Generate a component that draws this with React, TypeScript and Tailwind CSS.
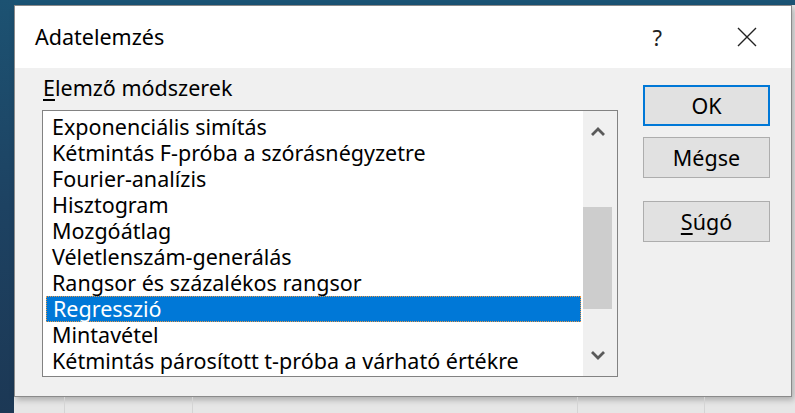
import React from "react";

const methods = [
  "Exponenciális simítás",
  "Kétmintás F-próba a szórásnégyzetre",
  "Fourier-analízis",
  "Hisztogram",
  "Mozgóátlag",
  "Véletlenszám-generálás",
  "Rangsor és százalékos rangsor",
  "Regresszió",
  "Mintavétel",
  "Kétmintás párosított t-próba a várható értékre",
];

const selected = "Regresszió";

function Chevron({ down = false }: { down?: boolean }) {
  return (
    <svg width="16" height="10" viewBox="0 0 16 10" className="text-[#5a5a5a]">
      <path
        d={down ? "M2 2 L8 8 L14 2" : "M2 8 L8 2 L14 8"}
        fill="none"
        stroke="currentColor"
        strokeWidth="2.8"
      />
    </svg>
  );
}

function DialogButton({
  children,
  primary = false,
  className = "",
}: {
  children: React.ReactNode;
  primary?: boolean;
  className?: string;
}) {
  return (
    <button
      className={`flex h-[41px] w-[127px] items-center justify-center bg-[#e1e1e1] text-[21.5px] leading-none text-black ${
        primary ? "border-2 border-[#0078d7]" : "border border-[#adadad]"
      } ${className}`}
    >
      {children}
    </button>
  );
}

export default function App() {
  return (
    <div
      className="flex h-[413px] w-[795px] overflow-hidden bg-[#e6e6e6]"
      style={{ fontFamily: '"Noto Sans", "Open Sans", sans-serif' }}
    >
      {/* worksheet edge on the left */}
      <div className="w-[14px] shrink-0 bg-gradient-to-b from-[#1c5272] via-[#1d4262] to-[#1c3855]" />

      <div className="flex flex-1 flex-col">
        <div className="h-[5px] shrink-0 bg-[#1a5475]" />

        {/* dialog window */}
        <div className="flex h-[392px] w-[778px] shrink-0 flex-col border border-[#8a8a8a] bg-[#f0f0f0] shadow-[2px_3px_6px_rgba(0,0,0,0.25)]">
          <div className="flex h-[62px] shrink-0 items-center bg-white pl-[20px]">
            <span className="text-[21.5px] leading-[28px] text-black">Adatelemzés</span>
            <span className="ml-auto mr-[75px] text-[22px] leading-[28px] text-[#222]">?</span>
            <svg width="20" height="20" viewBox="0 0 20 20" className="mr-[34px]">
              <path d="M1 1 L19 19 M19 1 L1 19" stroke="#222" strokeWidth="1.4" />
            </svg>
          </div>

          <div className="flex flex-1 pl-[27px] pt-[17px]">
            <div className="flex flex-col">
              <div className="-mt-[9px] h-[24px] pl-[1px] text-[21.5px] leading-[24px] text-black">
                <span className="underline underline-offset-[3px]">E</span>lemző módszerek
              </div>

              <div className="mt-[10px] flex h-[267px] w-[576px] border border-[#828282] bg-white">
                <ul className="flex-1 pl-[3px] pr-[2px] pt-[3px]">
                  {methods.map((m) => (
                    <li
                      key={m}
                      className={`flex h-[26px] items-center whitespace-nowrap pl-[6px] text-[21.5px] leading-[24px] ${
                        m === selected
                          ? "border border-dotted border-[#e89a4a] bg-[#0078d7] pl-[5px] text-white"
                          : "text-black"
                      }`}
                    >
                      {m}
                    </li>
                  ))}
                </ul>

                <div className="flex w-[34px] flex-col bg-[#f0f0f0]">
                  <div className="flex h-[42px] w-[29px] items-center justify-center">
                    <Chevron />
                  </div>
                  <div className="flex-1">
                    <div className="mt-[54px] h-[102px] w-[29px] bg-[#cdcdcd]" />
                  </div>
                  <div className="flex h-[42px] w-[29px] items-center justify-center">
                    <Chevron down />
                  </div>
                </div>
              </div>
            </div>

            <div className="ml-[25px] flex flex-col">
              <DialogButton primary>OK</DialogButton>
              <DialogButton className="mt-[11px]">Mégse</DialogButton>
              <DialogButton className="mt-[23px]">
                <span className="underline underline-offset-[3px]">S</span>úgó
              </DialogButton>
            </div>
          </div>
        </div>

        {/* worksheet cells below */}
        <div className="flex flex-1">
          <div className="w-[51px] border-r border-[#d4d4d4]" />
          <div className="w-[128px] border-r border-[#d4d4d4]" />
          <div className="w-[385px] border-r border-[#d4d4d4]" />
          <div className="w-[127px] border-r border-[#d4d4d4]" />
        </div>
      </div>
    </div>
  );
}
